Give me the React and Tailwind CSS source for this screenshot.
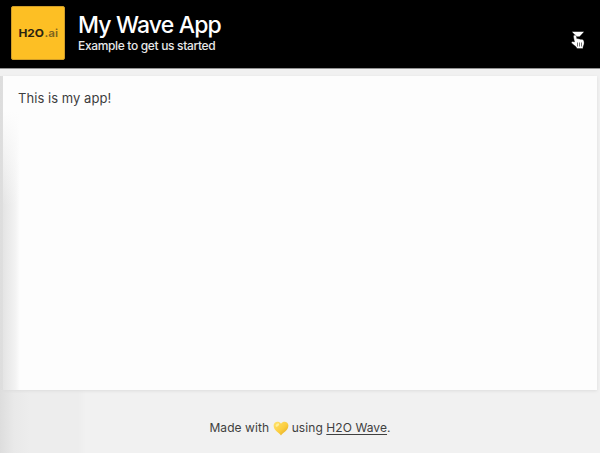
function Logo() {
  return (
    <div className="flex h-[54px] w-[54px] shrink-0 items-center justify-center rounded-[2px] border border-[#cf9c28] bg-[#fdbf24]">
      <svg width="42" height="14" viewBox="0 0 42 14" className="mt-[-2px]">
        <text x="1.500" y="11.500" textLength="25.500" lengthAdjust="spacingAndGlyphs" fontSize="11" fontWeight="700" fontFamily="Inter, sans-serif" fill="#2b2410">H2O</text>
        <text x="27.500" y="11.500" textLength="13.500" lengthAdjust="spacingAndGlyphs" fontSize="11" fontWeight="600" fontFamily="Inter, sans-serif" fill="#7d631e">.ai</text>
      </svg>
    </div>
  );
}

function MenuCursor() {
  return (
    <svg width="16" height="19" viewBox="0 0 16 19">
      <path d="M2 .8H14L9.500 5.500H6.500Z" fill="#fff" />
      <path
        d="M4.200 4.300c1-.5 2 0 2.200 1l.5 2.500c.7-.5 1.600-.3 2 .3.700-.4 1.600-.2 2 .4 1-.3 2-.1 2.600.8.700 1.200.8 2.900.4 4.300l-.9 2.400v1.600H7l-1-1.900-4-3.200c-1-1-.4-2.100.7-2.100l1.800.5-1-4.800c-.2-.8 0-1.500.7-1.800Z"
        fill="#fff"
        stroke="#111"
        strokeWidth=".4"
      />
      <path d="M7.500 11.500v4M9.500 11.500v4M11.500 11.500v4" stroke="#333" strokeWidth=".7" />
    </svg>
  );
}

function Heart() {
  return (
    <svg width="16" height="15" viewBox="0 0 16 15" className="mr-[3px] ml-[3.500px] shrink-0">
      <defs>
        <linearGradient id="gold" x1="0" y1="0" x2="1" y2="1">
          <stop offset="0" stopColor="#ffe36e" />
          <stop offset=".55" stopColor="#fbcd3f" />
          <stop offset="1" stopColor="#dda21b" />
        </linearGradient>
      </defs>
      <path d="M8 14.500C6.600 12 .6 9.800.6 4.600.6.800 5.600-.8 8 2.800c2.400-3.600 7.400-2 7.400 1.800C15.400 9.800 9.400 12 8 14.500Z" fill="url(#gold)" />
      <ellipse cx="4.400" cy="4" rx="2" ry="1.300" transform="rotate(-35 4.400 4)" fill="#ffef9c" />
    </svg>
  );
}

export default function App() {
  return (
    <div className="flex h-[453px] w-[600px] flex-col overflow-hidden bg-[#f1f1f1] bg-[linear-gradient(to_right,#dddddd_0px,#e9e9e9_14px,#ededed_30px,#ededed_78px,#f1f1f1_86px)] font-['Inter',sans-serif]">
      <header className="flex h-[68px] shrink-0 items-start bg-black pt-[6px] pr-[14px] pl-[11px] text-white">
        <Logo />
        <div className="ml-[13px] flex-1 pt-[5px]">
          <h1 className="text-[23px] leading-[28px] font-medium tracking-[-0.85px] whitespace-nowrap">My Wave App</h1>
          <p className="text-[12px] leading-[13px] font-medium tracking-[-0.34px] whitespace-nowrap text-[#e8e8e8]">Example to get us started</p>
        </div>
        <div className="mt-[25px]">
          <MenuCursor />
        </div>
      </header>
      <div className="h-px shrink-0 bg-[#929292]" />
      <div className="h-[7px] shrink-0 bg-[#f1f1f1]" />
      <main className="mr-[3px] ml-[3px] h-[314px] shrink-0 bg-[#fdfdfd] bg-[linear-gradient(to_bottom,#fdfdfd_35px,transparent_130px),linear-gradient(to_right,#e4e4e4_0px,#f2f2f2_12px,#fdfdfd_17px)] pt-[13px] pl-[15px] shadow-[0_1px_3px_#dcdcdc]">
        <p className="text-[13px] leading-[18px] tracking-[0.05px] text-[#3d3d3d]">This is my app!</p>
      </main>
      <footer className="mt-[29px] flex h-[18px] items-center justify-center text-[12px] leading-[18px] tracking-[0.08px] text-[#404040]">
        <span>Made with</span>
        <Heart />
        <span>
          using <a className="underline underline-offset-2">H2O Wave</a>.
        </span>
      </footer>
    </div>
  );
}
